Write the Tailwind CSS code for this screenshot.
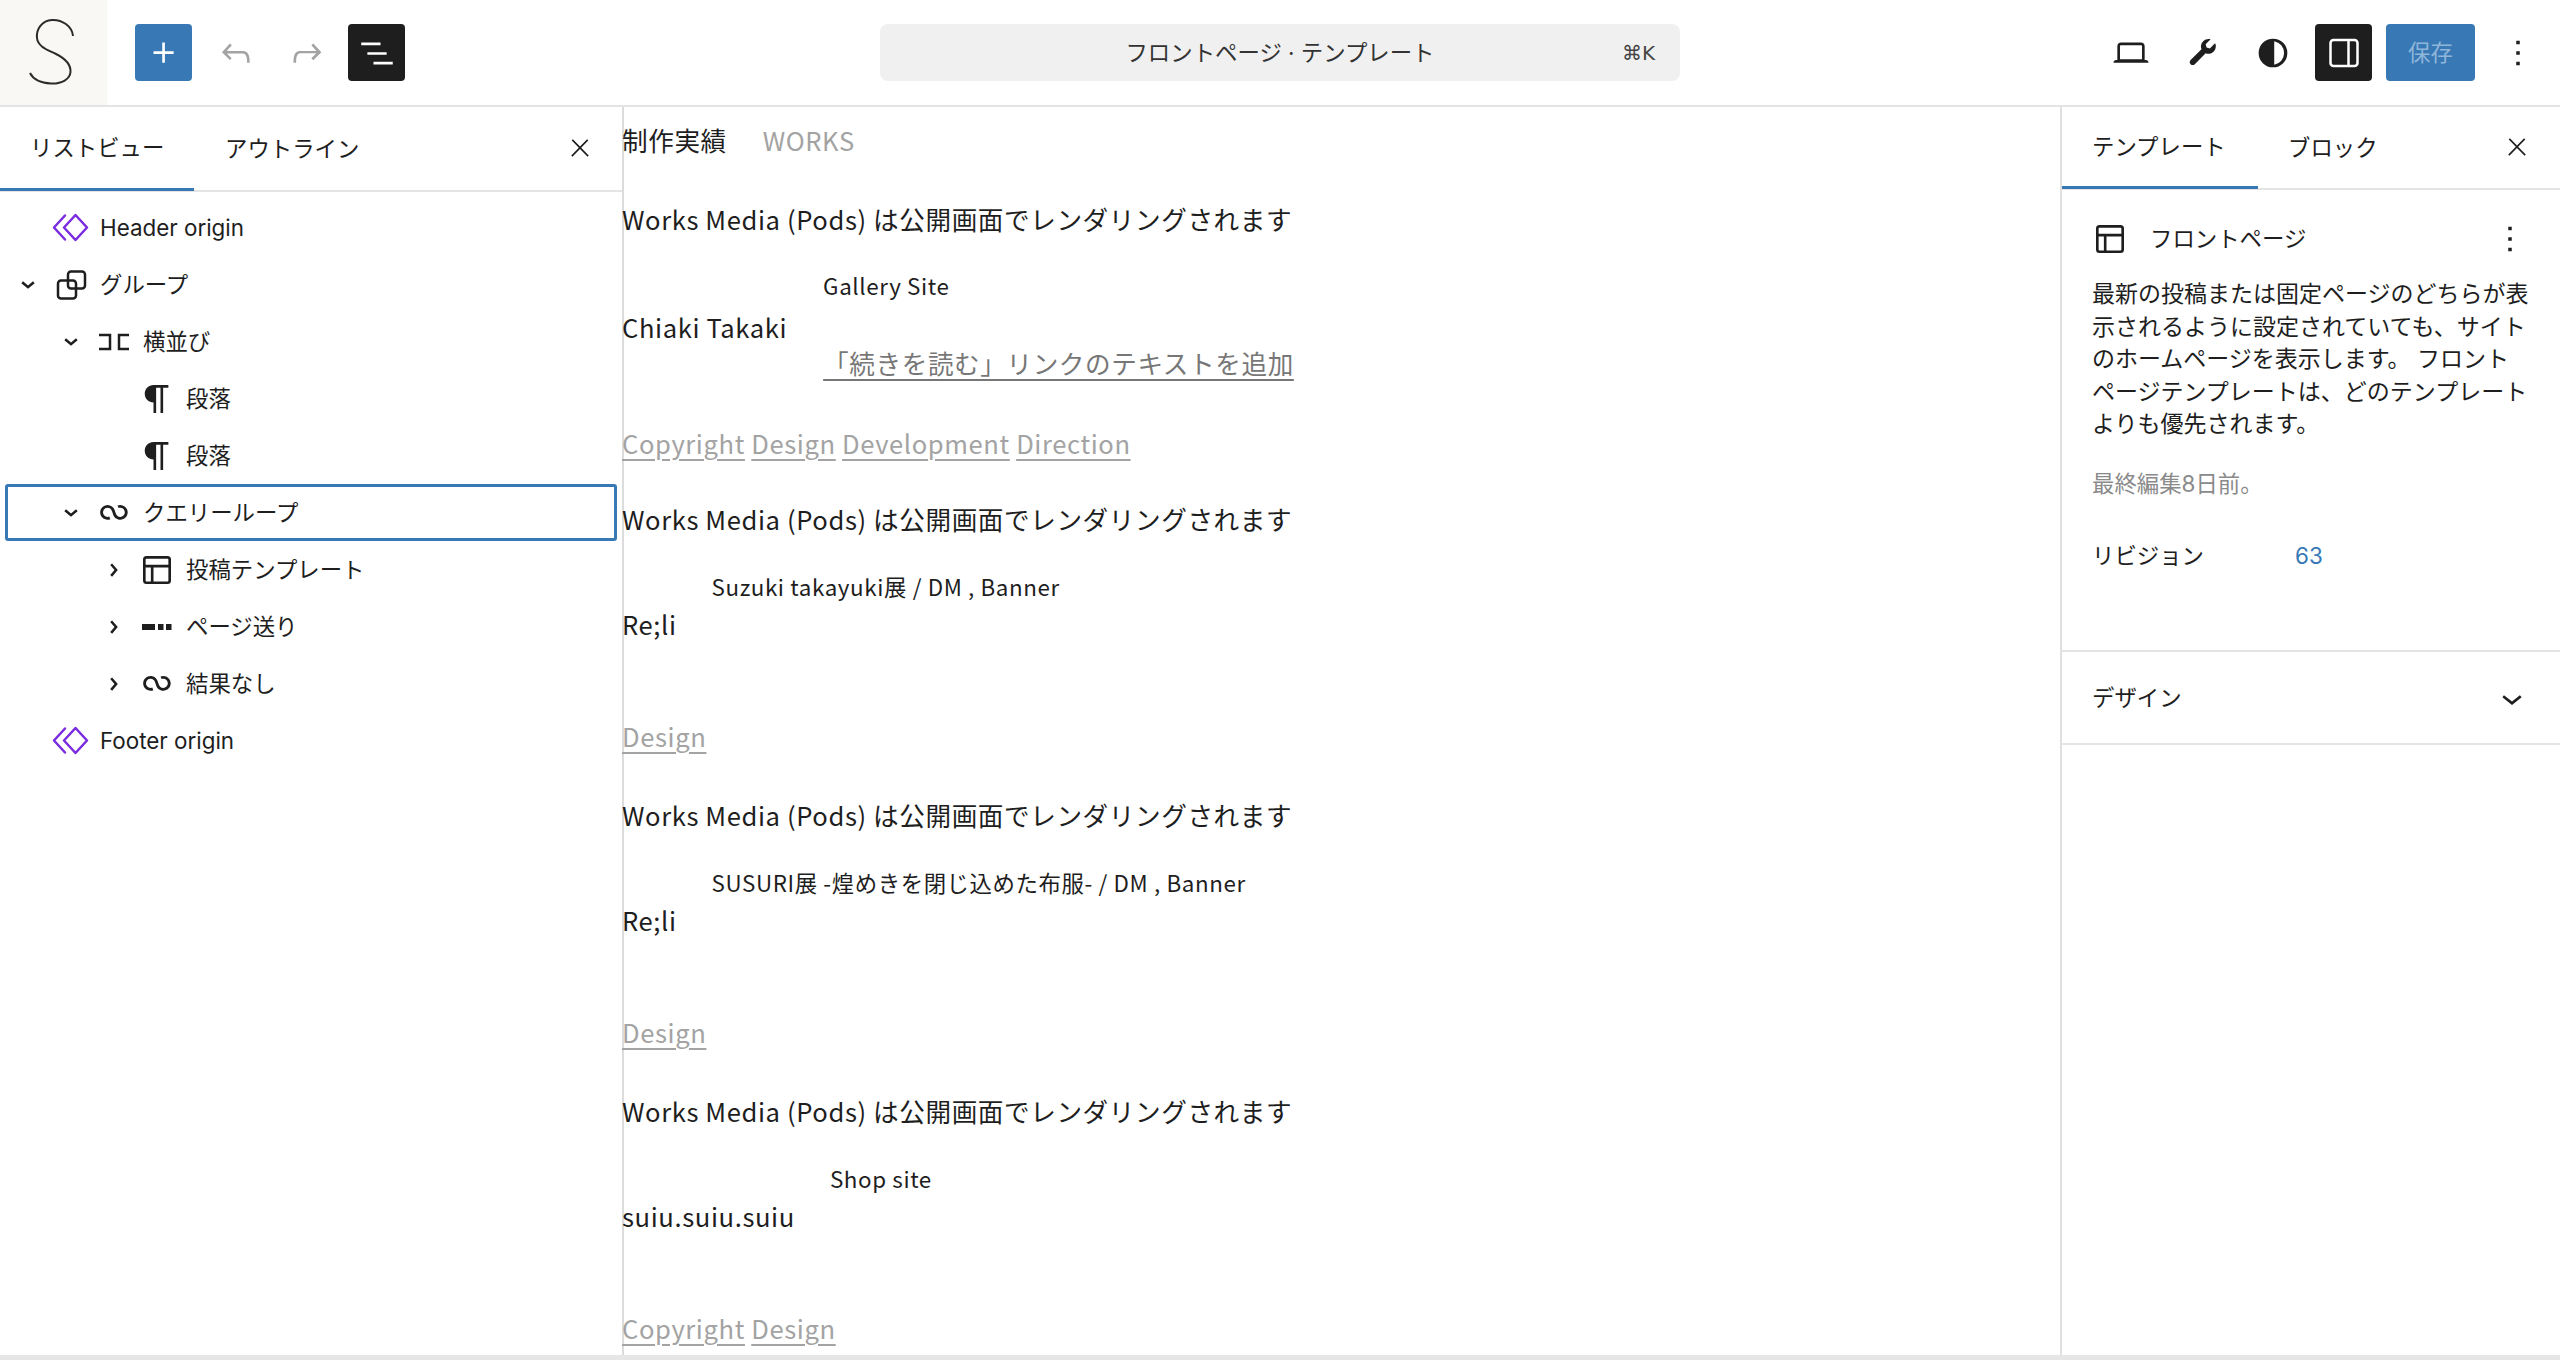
<!DOCTYPE html>
<html lang="ja">
<head>
    <meta charset="UTF-8">
    <title>フロントページ · テンプレート</title>
    <script src="https://cdn.jsdelivr.net/npm/@tailwindcss/browser@4"></script>
</head>
<body class="bg-white text-[#1e1e1e] font-['Inter','Noto_Sans_CJK_JP',sans-serif]">
<div class="w-[2560px] h-[1364px] overflow-hidden flex flex-col">

    <!-- Top bar -->
    <header class="h-[107px] shrink-0 border-b-2 border-[#e4e4e4] flex items-center">
        <div class="w-[880px] h-full flex items-center">
            <div class="w-[107px] h-full bg-[#f9f8f5] flex items-center justify-center">
                <svg width="107" height="105" viewBox="0 0 107 105" fill="none" stroke="#2b2b2b" stroke-width="2"><path d="M73 36C72 26 62 19.500 52 20C42 20.500 36 29 37 38C38 47 48 50 56 54C65 58.500 71 64 70.500 72C70 79 62 84 51 83.500C41 83 33 79 30 73"/></svg>
            </div>
            <button class="ml-[28px] w-[57px] h-[57px] rounded-[4px] bg-[#3778b5] flex items-center justify-center">
                <svg width="42" height="42" viewBox="0 0 24 24" fill="#fff"><path d="M11 12.500V17.500H12.500V12.500H17.500V11H12.500V6H11V11H6V12.500H11Z"/></svg>
            </button>
            <button class="ml-[15px] w-[57px] h-[57px] flex items-center justify-center">
                <svg width="42" height="42" viewBox="0 0 24 24" fill="#a3a3a3"><path d="M18.300 11.700c-.6-.6-1.400-.9-2.300-.9H6.700l2.900-3.300-1.100-1-4.500 5L8.500 16l1-1-2.700-2.700H16c.5 0 .9.2 1.300.5 1 1 1 3.400 1 4.500v.3h1.500v-.2c0-1.500 0-4.300-1.500-5.700z"/></svg>
            </button>
            <button class="ml-[14px] w-[57px] h-[57px] flex items-center justify-center">
                <svg width="42" height="42" viewBox="0 0 24 24" fill="#a3a3a3"><path d="M15.600 6.500l-1.100 1 2.900 3.300H8c-.9 0-1.700.3-2.300.9-1.400 1.500-1.400 4.200-1.400 5.600v.2h1.500v-.3c0-1.100 0-3.500 1-4.500.3-.3.7-.5 1.300-.5h9.200L14.500 15l1.100 1.100 4.600-4.600-4.600-5z"/></svg>
            </button>
            <button class="ml-[13px] w-[57px] h-[57px] rounded-[4px] bg-[#1e1e1e] flex items-center justify-center">
                <svg width="42" height="42" viewBox="0 0 24 24" fill="#fff"><path d="M3 6h11v1.500H3V6Zm3.500 5.500h11V13h-11v-1.500ZM21 17H10v1.500h11V17Z"/></svg>
            </button>
        </div>
        <div class="relative w-[800px] h-[57px] rounded-[8px] bg-[#f0f0f0] flex items-center justify-center text-[22.4px] text-[#333]">
            フロントページ · テンプレート
            <span class="absolute right-[25px] top-[14px] text-[20px] font-['DejaVu_Sans','Inter',sans-serif] text-[#444]">⌘K</span>
        </div>
        <div class="flex-1 flex items-center justify-end gap-[14px] pr-[14px]">
            <button class="w-[57px] h-[57px] flex items-center justify-center">
                <svg width="42" height="42" viewBox="0 0 24 24" fill="#1e1e1e"><path d="M20.500 16h-.7V8c0-1.100-.9-2-2-2H6.200c-1.100 0-2 .9-2 2v8h-.7c-.8 0-1.500.7-1.500 1.500h20c0-.8-.7-1.500-1.500-1.500zM5.700 8c0-.3.2-.5.5-.5h11.600c.3 0 .5.2.5.5v7.600H5.700V8z"/></svg>
            </button>
            <button class="w-[57px] h-[57px] flex items-center justify-center">
                <svg width="42" height="42" viewBox="0 0 24 24" fill="#1e1e1e"><path d="M19.300 6.600l-2.800 2.800-1.900-.5-.5-1.900 2.800-2.800c-1.500-.4-3.100 0-4.200 1.100-1.300 1.300-1.600 3-1 4.500l-6.200 6.200c-.7.700-.7 1.800 0 2.400.7.700 1.700.7 2.400 0l6.200-6.200c1.600.6 3.300.3 4.600-1 1.100-1.100 1.500-3 1-4.500z"/></svg>
            </button>
            <button class="w-[57px] h-[57px] flex items-center justify-center">
                <svg width="42" height="42" viewBox="0 0 24 24" fill="#1e1e1e"><path fill-rule="evenodd" d="M12 3.800a8.200 8.200 0 100 16.400 8.200 8.200 0 000-16.400zm.7 1.500a6.800 6.800 0 010 13.400V5.300z"/></svg>
            </button>
            <button class="w-[57px] h-[57px] rounded-[4px] bg-[#1e1e1e] flex items-center justify-center">
                <svg width="42" height="42" viewBox="0 0 42 42" fill="none" stroke="#fff" stroke-width="2.500"><rect x="7.500" y="8" width="27" height="26" rx="3"/><path d="M25.500 8V34"/></svg>
            </button>
            <button class="w-[89px] h-[57px] rounded-[4px] bg-[#3778b5] text-[22.4px] text-[#8fb5d9]">保存</button>
            <button class="w-[57px] h-[57px] flex items-center justify-center">
                <svg width="42" height="42" viewBox="0 0 24 24" fill="#1e1e1e"><path d="M13 19h-2v-2h2v2zm0-6h-2v-2h2v2zm0-6h-2V5h2v2z"/></svg>
            </button>
        </div>
    </header>

    <main class="flex h-[1248px] shrink-0">

        <!-- List view -->
        <aside class="w-[622px] shrink-0 text-[22.4px]">
            <div class="h-[85px] border-b-2 border-[#e4e4e4] flex items-center relative">
                <div class="w-[194px] h-full flex items-center pl-[30px] border-b-[3px] border-[#3778b5] -mb-[2px]">リストビュー</div>
                <div class="ml-[31px] h-full flex items-center">アウトライン</div>
                <svg class="absolute left-[566px] top-[27px]" width="28" height="28" viewBox="0 0 24 24" fill="#1e1e1e"><path d="M13 11.800l6.100-6.300-1-1-6.100 6.200-6.100-6.200-1 1 6.100 6.300-6.500 6.700 1 1 6.500-6.600 6.500 6.600 1-1z"/></svg>
            </div>
            <ul class="pt-[7px]">
                <li class="mx-[5px] h-[57px] border-[3px] border-transparent flex items-center">
                    <span class="w-[40px] mr-[2px]"></span>
                    <svg width="42" height="42" viewBox="0 0 42 42" fill="none" stroke="#7a2be0" stroke-width="2.500" stroke-linejoin="round" stroke-linecap="round"><path d="M25.500 8L37 20.500L25.500 33L14 20.500Z"/><path d="M15 8.500L4 20.500L15 32.500"/></svg>
                    <span class="ml-[8px]">Header origin</span>
                </li>
                <li class="mx-[5px] h-[57px] border-[3px] border-transparent flex items-center">
                    <svg class="mr-[2px]" width="40" height="40" viewBox="0 0 24 24" fill="#1e1e1e"><path d="m15.990 10.889-3.988 3.418-3.988-3.418.976-1.140 3.012 2.582 3.012-2.581.976 1.139Z"/></svg>
                    <svg width="42" height="42" viewBox="0 0 42 42" fill="none" stroke="#1e1e1e" stroke-width="2.500"><rect x="18" y="7.500" width="17" height="17" rx="3"/><rect x="8" y="16.500" width="18" height="18" rx="3"/></svg>
                    <span class="ml-[8px]">グループ</span>
                </li>
                <li class="mx-[5px] h-[57px] pl-[43px] border-[3px] border-transparent flex items-center">
                    <svg class="mr-[2px]" width="40" height="40" viewBox="0 0 24 24" fill="#1e1e1e"><path d="m15.990 10.889-3.988 3.418-3.988-3.418.976-1.140 3.012 2.582 3.012-2.581.976 1.139Z"/></svg>
                    <svg width="42" height="42" viewBox="0 0 42 42" fill="none" stroke="#1e1e1e" stroke-width="2.500"><path d="M6 14H17V28H6"/><path d="M36 14H26V28H36"/></svg>
                    <span class="ml-[8px]">横並び</span>
                </li>
                <li class="mx-[5px] h-[57px] pl-[86px] border-[3px] border-transparent flex items-center">
                    <span class="w-[40px] mr-[2px]"></span>
                    <svg width="42" height="42" viewBox="0 0 24 24" fill="#1e1e1e"><path d="m9.996 14v-.225l.004.000v6.225h1.500v-14.500h2.500v14.500h1.500v-14.500h3v-1.500h-8.504c-2.761 0-5 2.239-5 5 0 2.761 2.239 5 5 5z"/></svg>
                    <span class="ml-[8px]">段落</span>
                </li>
                <li class="mx-[5px] h-[57px] pl-[86px] border-[3px] border-transparent flex items-center">
                    <span class="w-[40px] mr-[2px]"></span>
                    <svg width="42" height="42" viewBox="0 0 24 24" fill="#1e1e1e"><path d="m9.996 14v-.225l.004.000v6.225h1.500v-14.500h2.500v14.500h1.500v-14.500h3v-1.500h-8.504c-2.761 0-5 2.239-5 5 0 2.761 2.239 5 5 5z"/></svg>
                    <span class="ml-[8px]">段落</span>
                </li>
                <li class="mx-[5px] h-[57px] pl-[43px] border-[3px] border-[#3778b5] rounded-[3px] flex items-center">
                    <svg class="mr-[2px]" width="40" height="40" viewBox="0 0 24 24" fill="#1e1e1e"><path d="m15.990 10.889-3.988 3.418-3.988-3.418.976-1.140 3.012 2.582 3.012-2.581.976 1.139Z"/></svg>
                    <svg width="42" height="42" viewBox="0 0 24 24" fill="#1e1e1e"><path d="M18.182 11.639C18.182 13.080 17.014 14.249 15.573 14.249C14.358 14.249 13.335 13.418 13.045 12.292L13.038 12.263L13.028 12.234L12.399 10.377L12.394 10.379C11.857 8.650 10.246 7.394 8.340 7.394C5.995 7.394 4.094 9.295 4.094 11.639C4.094 13.984 5.995 15.884 8.340 15.884C8.885 15.884 9.408 15.781 9.889 15.592L9.292 14.070C8.998 14.185 8.677 14.249 8.340 14.249C6.898 14.249 5.730 13.080 5.730 11.639C5.730 10.198 6.898 9.030 8.340 9.030C9.554 9.030 10.577 9.860 10.867 10.986L10.877 10.984L11.470 12.731C11.952 14.546 13.605 15.884 15.573 15.884C17.917 15.884 19.818 13.984 19.818 11.639C19.818 9.295 17.917 7.394 15.573 7.394C15.029 7.394 14.507 7.497 14.026 7.685L14.622 9.208C14.916 9.093 15.236 9.030 15.573 9.030C17.014 9.030 18.182 10.198 18.182 11.639Z"/></svg>
                    <span class="ml-[8px]">クエリーループ</span>
                </li>
                <li class="mx-[5px] h-[57px] pl-[86px] border-[3px] border-transparent flex items-center">
                    <svg class="mr-[2px]" width="40" height="40" viewBox="0 0 24 24" fill="#1e1e1e"><path d="M10.862 8.041L14.281 12.029L10.862 16.017L9.723 15.041L12.305 12.029L9.723 9.017L10.862 8.041Z"/></svg>
                    <svg width="42" height="42" viewBox="0 0 24 24" fill="#1e1e1e"><path d="M18 5.500H6a.5.5 0 00-.5.5v3h13V6a.5.5 0 00-.5-.5zm.5 5H10v8h8a.5.5 0 00.5-.5v-7.500zm-10 0h-3V18a.5.5 0 00.5.5h2.500v-8zM6 4h12a2 2 0 012 2v12a2 2 0 01-2 2H6a2 2 0 01-2-2V6a2 2 0 012-2z"/></svg>
                    <span class="ml-[8px]">投稿テンプレート</span>
                </li>
                <li class="mx-[5px] h-[57px] pl-[86px] border-[3px] border-transparent flex items-center">
                    <svg class="mr-[2px]" width="40" height="40" viewBox="0 0 24 24" fill="#1e1e1e"><path d="M10.862 8.041L14.281 12.029L10.862 16.017L9.723 15.041L12.305 12.029L9.723 9.017L10.862 8.041Z"/></svg>
                    <svg width="42" height="42" viewBox="0 0 42 42" fill="#1e1e1e"><rect x="6" y="18" width="13" height="6"/><rect x="22" y="18" width="5.500" height="6"/><rect x="30" y="18" width="5.500" height="6"/></svg>
                    <span class="ml-[8px]">ページ送り</span>
                </li>
                <li class="mx-[5px] h-[57px] pl-[86px] border-[3px] border-transparent flex items-center">
                    <svg class="mr-[2px]" width="40" height="40" viewBox="0 0 24 24" fill="#1e1e1e"><path d="M10.862 8.041L14.281 12.029L10.862 16.017L9.723 15.041L12.305 12.029L9.723 9.017L10.862 8.041Z"/></svg>
                    <svg width="42" height="42" viewBox="0 0 24 24" fill="#1e1e1e"><path d="M18.182 11.639C18.182 13.080 17.014 14.249 15.573 14.249C14.358 14.249 13.335 13.418 13.045 12.292L13.038 12.263L13.028 12.234L12.399 10.377L12.394 10.379C11.857 8.650 10.246 7.394 8.340 7.394C5.995 7.394 4.094 9.295 4.094 11.639C4.094 13.984 5.995 15.884 8.340 15.884C8.885 15.884 9.408 15.781 9.889 15.592L9.292 14.070C8.998 14.185 8.677 14.249 8.340 14.249C6.898 14.249 5.730 13.080 5.730 11.639C5.730 10.198 6.898 9.030 8.340 9.030C9.554 9.030 10.577 9.860 10.867 10.986L10.877 10.984L11.470 12.731C11.952 14.546 13.605 15.884 15.573 15.884C17.917 15.884 19.818 13.984 19.818 11.639C19.818 9.295 17.917 7.394 15.573 7.394C15.029 7.394 14.507 7.497 14.026 7.685L14.622 9.208C14.916 9.093 15.236 9.030 15.573 9.030C17.014 9.030 18.182 10.198 18.182 11.639Z"/></svg>
                    <span class="ml-[8px]">結果なし</span>
                </li>
                <li class="mx-[5px] h-[57px] border-[3px] border-transparent flex items-center">
                    <span class="w-[40px] mr-[2px]"></span>
                    <svg width="42" height="42" viewBox="0 0 42 42" fill="none" stroke="#7a2be0" stroke-width="2.500" stroke-linejoin="round" stroke-linecap="round"><path d="M25.500 8L37 20.500L25.500 33L14 20.500Z"/><path d="M15 8.500L4 20.500L15 32.500"/></svg>
                    <span class="ml-[8px]">Footer origin</span>
                </li>
            </ul>
        </aside>

        <!-- Canvas -->
        <section class="w-[1438px] shrink-0 shadow-[inset_2px_0_0_#dcdcdc] overflow-hidden font-['Noto_Sans_CJK_JP',sans-serif] text-[25.6px] tracking-[0.6px] leading-[40px]">
            <div class="h-[66px] flex items-center gap-[36px]">
                <span>制作実績</span>
                <span class="text-[#a3a3a3]">WORKS</span>
            </div>

            <article class="pt-[26px]">
                <p>Works Media (Pods) は公開画面でレンダリングされます</p>
                <div class="mt-[26px] h-[118px] flex gap-[36px]">
                    <p class="pt-[42px]">Chiaki Takaki</p>
                    <div>
                        <p class="text-[22.4px]">Gallery Site</p>
                        <a class="block mt-[38px] text-[#777] underline underline-offset-[5px]">「続きを読む」リンクのテキストを追加</a>
                    </div>
                </div>
                <p class="mt-[40px] text-[#a3a3a3]"><a class="underline underline-offset-[5px]">Copyright</a> <a class="underline underline-offset-[5px]">Design</a> <a class="underline underline-offset-[5px]">Development</a> <a class="underline underline-offset-[5px]">Direction</a></p>
            </article>

            <article class="pt-[36px]">
                <p>Works Media (Pods) は公開画面でレンダリングされます</p>
                <div class="mt-[27px] h-[118px] flex gap-[35px]">
                    <p class="pt-[38px]">Re;li</p>
                    <p class="text-[22.4px]">Suzuki takayuki展 / DM , Banner</p>
                </div>
                <p class="mt-[32px] text-[#a3a3a3]"><a class="underline underline-offset-[5px]">Design</a></p>
            </article>

            <article class="pt-[39px]">
                <p>Works Media (Pods) は公開画面でレンダリングされます</p>
                <div class="mt-[27px] h-[118px] flex gap-[35px]">
                    <p class="pt-[38px]">Re;li</p>
                    <p class="text-[22.4px]">SUSURI展 -煌めきを閉じ込めた布服- / DM , Banner</p>
                </div>
                <p class="mt-[32px] text-[#a3a3a3]"><a class="underline underline-offset-[5px]">Design</a></p>
            </article>

            <article class="pt-[39px]">
                <p>Works Media (Pods) は公開画面でレンダリングされます</p>
                <div class="mt-[27px] h-[118px] flex gap-[35px]">
                    <p class="pt-[38px]">suiu.suiu.suiu</p>
                    <p class="text-[22.4px]">Shop site</p>
                </div>
                <p class="mt-[32px] text-[#a3a3a3]"><a class="underline underline-offset-[5px]">Copyright</a> <a class="underline underline-offset-[5px]">Design</a></p>
            </article>
        </section>

        <!-- Settings sidebar -->
        <aside class="w-[500px] shrink-0 border-l-2 border-[#e0e0e0] text-[22.4px]">
            <div class="h-[83px] border-b-2 border-[#e4e4e4] flex items-center relative">
                <div class="w-[196px] h-full flex items-center pl-[30px] border-b-[3px] border-[#3778b5] -mb-[2px]">テンプレート</div>
                <div class="ml-[30px] h-full flex items-center">ブロック</div>
                <svg class="absolute left-[441px] top-[26px]" width="28" height="28" viewBox="0 0 24 24" fill="#1e1e1e"><path d="M13 11.800l6.100-6.300-1-1-6.100 6.200-6.100-6.200-1 1 6.100 6.300-6.500 6.700 1 1 6.500-6.600 6.500 6.600 1-1z"/></svg>
            </div>
            <div class="px-[30px] border-b-2 border-[#e4e4e4] h-[435px]">
                <div class="mt-[27px] h-[44px] flex items-center relative">
                    <svg class="ml-[-3px]" width="42" height="42" viewBox="0 0 24 24" fill="#1e1e1e"><path d="M18 5.500H6a.5.5 0 00-.5.5v3h13V6a.5.5 0 00-.5-.5zm.5 5H10v8h8a.5.5 0 00.5-.5v-7.500zm-10 0h-3V18a.5.5 0 00.5.5h2.500v-8zM6 4h12a2 2 0 012 2v12a2 2 0 01-2 2H6a2 2 0 01-2-2V6a2 2 0 012-2z"/></svg>
                    <span class="ml-[19px]">フロントページ</span>
                    <svg class="absolute left-[397px] top-[1px]" width="42" height="42" viewBox="0 0 24 24" fill="#1e1e1e"><path d="M13 19h-2v-2h2v2zm0-6h-2v-2h2v2zm0-6h-2V5h2v2z"/></svg>
                </div>
                <p class="mt-[17px] leading-[32.6px] text-[23px]">最新の投稿または固定ページのどちらが表<br>示されるように設定されていても、サイト<br>のホームページを表示します。 フロント<br>ページテンプレートは、どのテンプレート<br>よりも優先されます。</p>
                <p class="mt-[27px] leading-[32px] text-[#8a8a8a]">最終編集8日前。</p>
                <div class="mt-[40px] flex items-center leading-[32px]">
                    <span class="w-[203px]">リビジョン</span>
                    <span class="text-[#3778b5]">63</span>
                </div>
            </div>
            <div class="h-[93px] px-[30px] border-b-2 border-[#e4e4e4] flex items-center justify-between">
                <span>デザイン</span>
                <svg class="mr-[-3px]" width="42" height="42" viewBox="0 0 24 24" fill="#1e1e1e"><path d="M17.500 11.600L12 16l-5.500-4.400.9-1.200L12 14l4.500-3.600 1 1.200z"/></svg>
            </div>
        </aside>
    </main>

    <div class="h-[5px] shrink-0 bg-[#e6e6e6]"></div>
</div>
</body>
</html>
